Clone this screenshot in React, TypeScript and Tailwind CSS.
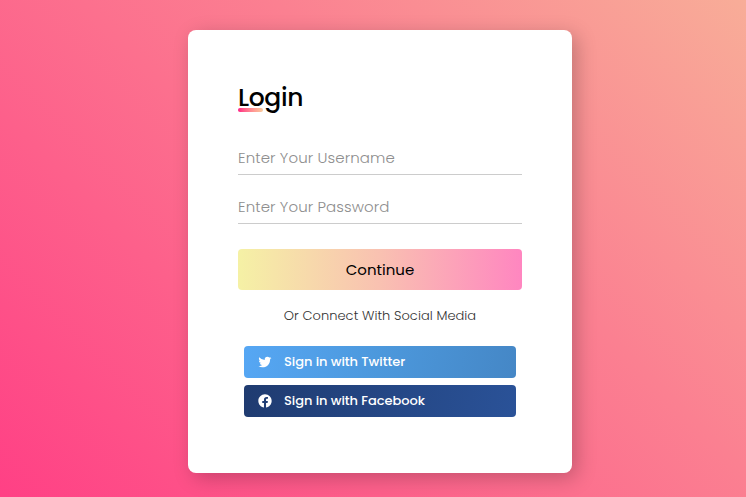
import { BiLogoTwitter, BiLogoFacebookCircle } from "react-icons/bi";

const line =
  "block h-[41px] w-full border-b border-[#ccc] bg-transparent pt-[7px] font-light text-[15px] tracking-[0.1px] text-black outline-none placeholder:text-[#8e8e8e]";
const social =
  "flex h-8 w-full items-center rounded-[4px] pl-[13px] text-[13px] font-medium tracking-[-0.05px] text-white";

export default function App() {
  return (
    <main className="flex h-[497px] w-full justify-center bg-[linear-gradient(45deg,#ff4085_0%,#fb8091_62%,#f8ad98_100%)] pt-[30px] pl-[14px] font-[Poppins,Inter,sans-serif]">
      <form className="h-[443px] w-[384px] rounded-[8px] bg-white px-[50px] pt-[50px] shadow-[5px_5px_20px_rgba(0,0,0,0.22)]">
        <h1 className="relative h-9 text-[25px] leading-9 font-medium tracking-[-0.35px] text-black">
          Login
          <span className="absolute bottom-[4px] left-0 h-1 w-[25px] rounded-[5px] bg-linear-to-r from-[#ff1684] to-[#f7cb9c]" />
        </h1>
        <div className="mt-[18px] flex flex-col gap-2">
          <input className={line} type="text" placeholder="Enter Your Username" />
          <input className={line} type="password" placeholder="Enter Your Password" />
        </div>
        <button
          type="button"
          className="mt-[25px] block h-[41px] w-full rounded-[4px] bg-[linear-gradient(to_right,#f5f1a5,#f9c1b1,#ff86c0)] pt-px text-[15px] font-normal text-black"
        >
          Continue
        </button>
        <p className="mt-[16px] text-center text-[13px] leading-5 font-light tracking-[0.05px] text-[#333]">
          Or Connect With Social Media
        </p>
        <div className="mt-5 flex flex-col gap-[7px] px-[6px]">
          <button type="button" className={`${social} bg-[linear-gradient(100deg,#56a7f4,#4c98dc_50%,#4587c6)]`}>
            <BiLogoTwitter className="size-4" />
            <span className="ml-[11px]">Sign in with Twitter</span>
          </button>
          <button type="button" className={`${social} bg-[linear-gradient(100deg,#1f3b70,#2a5298)]`}>
            <BiLogoFacebookCircle className="size-4" />
            <span className="ml-[11px]">Sign in with Facebook</span>
          </button>
        </div>
      </form>
    </main>
  );
}
